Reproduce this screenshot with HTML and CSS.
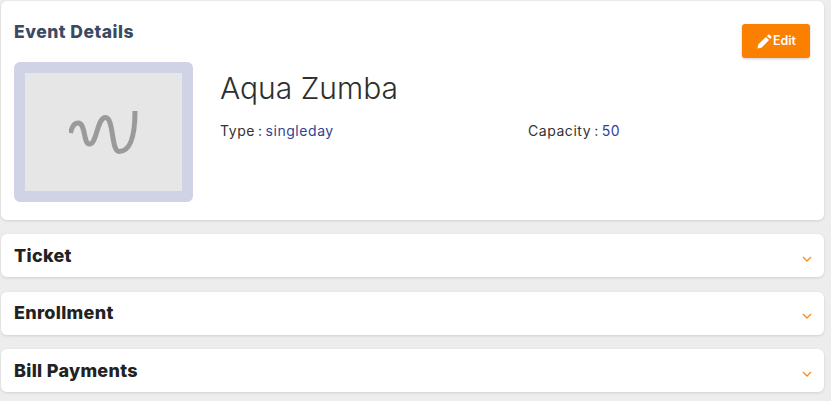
FILE: index.html
```html
<!DOCTYPE html>
<html lang="en">
<head>
<meta charset="utf-8">
<title>Event Details</title>
<link rel="stylesheet" href="styles.css">
</head>
<body>
<main class="page">
  <section class="card details">
    <div class="details-head">
      <h2 class="details-title">Event Details</h2>
      <button class="edit" type="button">
        <svg class="edit-icon" viewBox="0 0 16 16" aria-hidden="true"><path d="M0.5 15.5l0.8-4.2 8.2-8.2 3.4 3.4-8.2 8.2zM10.6 2l1.3-1.3c0.4-0.4 1-0.4 1.4 0l2 2c0.4 0.4 0.4 1 0 1.4l-1.3 1.3z"/></svg>
        <span>Edit</span>
      </button>
    </div>
    <div class="details-body">
      <div class="thumb">
        <svg class="thumb-mark" viewBox="0 0 70 50" aria-hidden="true"><path d="M1.500 26C3 19 6 16 9 16C17 16 14 37 20.500 37C28 37 28 10.500 36.500 10.500C45 10.500 42 44.500 50 44.500C61 44.500 66 30 66 4"/></svg>
      </div>
      <div class="info">
        <h1 class="name">Aqua Zumba</h1>
        <div class="meta">
          <p class="meta-item">Type : <span class="meta-value">singleday</span></p>
          <p class="meta-item">Capacity : <span class="meta-value">50</span></p>
        </div>
      </div>
    </div>
  </section>
  <section class="card row">
    <h3 class="row-title">Ticket</h3>
    <svg class="chev" viewBox="0 0 10 6" aria-hidden="true"><path d="M1 1l4 4 4-4"/></svg>
  </section>
  <section class="card row">
    <h3 class="row-title">Enrollment</h3>
    <svg class="chev" viewBox="0 0 10 6" aria-hidden="true"><path d="M1 1l4 4 4-4"/></svg>
  </section>
  <section class="card row">
    <h3 class="row-title">Bill Payments</h3>
    <svg class="chev" viewBox="0 0 10 6" aria-hidden="true"><path d="M1 1l4 4 4-4"/></svg>
  </section>
</main>
</body>
</html>
```
FILE: styles.css
```css
* { box-sizing: border-box; }
html, body { margin: 0; height: 100%; overflow: hidden; }
body {
  background: #ededed;
  font-family: Inter, "Noto Sans", "Liberation Sans", sans-serif;
  color: #2b2b2b;
}
.page {
  width: 823px;
  margin-left: 1px;
  padding-top: 1px;
  display: flex;
  flex-direction: column;
}
.card {
  background: #fff;
  border-radius: 6px;
  box-shadow: 0 1px 3px rgba(0, 0, 0, 0.12);
}
.details {
  height: 219px;
  padding: 22px 14px 0 13px;
  margin-bottom: 14px;
}
.details-head {
  display: flex;
  justify-content: space-between;
  align-items: flex-start;
  height: 39px;
}
.details-title {
  margin: 0;
  font-size: 17.500px;
  line-height: 18px;
  font-weight: 800;
  letter-spacing: 0.5px;
  color: #3b4a63;
}
.edit {
  width: 68px;
  height: 34px;
  margin-top: 1px;
  border: 0;
  border-radius: 3px;
  background: #fb7f00;
  color: #fff;
  font: 600 12.500px/1 Inter, sans-serif;
  display: flex;
  align-items: center;
  justify-content: center;
  gap: 1px;
  padding: 0 0 0 1px;
  box-shadow: 0 1px 3px rgba(0, 0, 0, 0.2);
}
.edit-icon { width: 15px; height: 15px; fill: #fff; }
.details-body { display: flex; }
.thumb {
  width: 179px;
  height: 140px;
  border: 11px solid #d0d3e6;
  border-radius: 6px;
  background: #e6e6e6;
  display: flex;
  align-items: center;
  justify-content: center;
}
.thumb-mark {
  width: 70px;
  height: 50px;
  fill: none;
  stroke: #9a9a9a;
  stroke-width: 5;
}
.info { flex: 1; padding: 8px 0 0 27px; }
.name {
  margin: 0 0 16px;
  font-size: 30px;
  line-height: 36px;
  font-weight: 300;
  color: #2e2e2e;
}
.meta { display: grid; grid-template-columns: 308px 1fr; }
.meta-item {
  margin: 0;
  font-size: 14px;
  line-height: 18px;
  font-weight: 400;
  letter-spacing: 0.55px;
  word-spacing: -1.5px;
  color: #333;
}
.meta-value { color: #2f4296; }
.row {
  height: 43px;
  margin-bottom: 14.600px;
  padding: 0 13px;
  display: flex;
  align-items: center;
  justify-content: space-between;
}
.row:last-child { margin-bottom: 0; }
.row-title {
  margin: 0;
  font-size: 18px;
  line-height: 20px;
  font-weight: 800;
  letter-spacing: 0.3px;
  color: #222;
}
.chev {
  width: 10px;
  height: 6px;
  margin-top: 6px;
  margin-right: -1px;
  fill: none;
  stroke: #fb8a1e;
  stroke-width: 1.300;
}
```
